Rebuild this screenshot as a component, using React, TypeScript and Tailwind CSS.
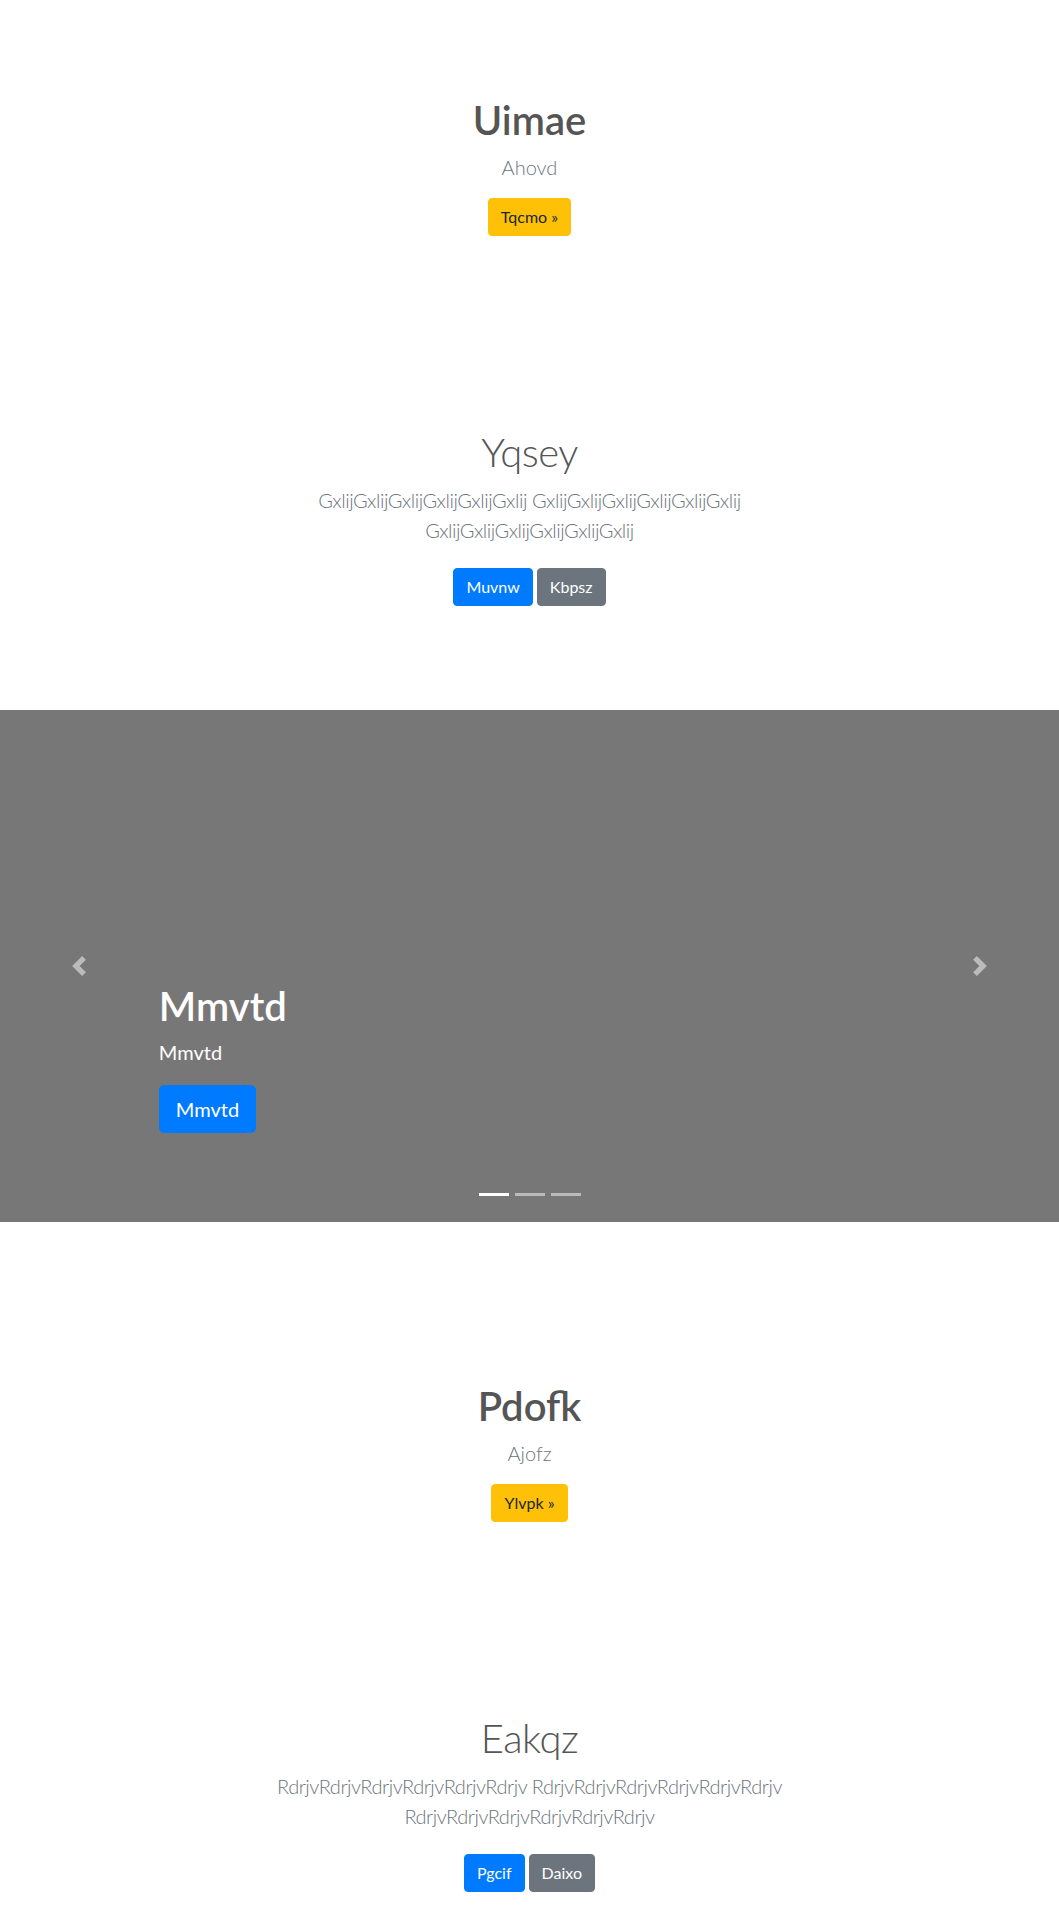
import React from "react";

const font = { fontFamily: 'Lato, "Open Sans", Arial, sans-serif' };

function Btn({ color, children }: { color: "warning" | "primary" | "secondary"; children: React.ReactNode }) {
  const cls =
    color === "warning"
      ? "bg-[#ffc107] border-[#ffc107] text-[#212529]"
      : color === "primary"
      ? "bg-[#007bff] border-[#007bff] text-white"
      : "bg-[#6c757d] border-[#6c757d] text-white";
  return (
    <a className={`inline-block border rounded-[4px] px-[12px] py-[6px] text-[16px] leading-[24px] ${cls}`} href="#">
      {children}
    </a>
  );
}

function Jumbo({ title, lead, btn, mt }: { title: string; lead: string; btn: string; mt: string }) {
  return (
    <section className={`${mt} flex flex-col items-center text-center`}>
      <h1 className="text-[40px] leading-[48px] font-semibold text-[#555] mb-[8px]">{title}</h1>
      <p className="text-[20px] leading-[30px] font-light text-[#6c757d] mb-[16px]">{lead}</p>
      <Btn color="warning">{btn} »</Btn>
    </section>
  );
}

function Hero({ title, text, b1, b2 }: { title: string; text: string; b1: string; b2: string }) {
  return (
    <section className="mt-[192px] flex flex-col items-center text-center">
      <h1 className="text-[40px] leading-[48px] font-light text-[#555] mb-[9px] tracking-[-0.5px]">{title}</h1>
      <p className="max-w-[610px] text-[20px] leading-[30px] font-light text-[#6c757d] mb-[23px] tracking-[-0.45px]">{text}</p>
      <div className="flex gap-[4px]">
        <Btn color="primary">{b1}</Btn>
        <Btn color="secondary">{b2}</Btn>
      </div>
    </section>
  );
}

function Chevron({ dir }: { dir: "prev" | "next" }) {
  return (
    <svg width="20" height="20" viewBox="0 0 8 8" fill="#fff">
      {dir === "prev" ? (
        <path d="M5.25 0l-4 4 4 4 1.5-1.5L4.25 4l2.5-2.5L5.25 0z" />
      ) : (
        <path d="M2.75 0l-1.5 1.5L3.75 4l-2.5 2.5L2.75 8l4-4-4-4z" />
      )}
    </svg>
  );
}

function Carousel() {
  return (
    <section className="relative mt-[104px] h-[512px] bg-[#777] flex flex-col justify-end pl-[15%] pb-[89px]">
      <h1 className="text-[40px] leading-[48px] font-semibold text-white mb-[7px]">Mmvtd</h1>
      <p className="text-[20px] leading-[30px] text-white mb-[18px]">Mmvtd</p>
      <div>
        <a href="#" className="inline-block bg-[#007bff] border border-[#007bff] text-white rounded-[5px] px-[16px] py-[8px] text-[20px] leading-[30px]">
          Mmvtd
        </a>
      </div>
      <div className="absolute left-0 top-0 bottom-0 w-[15%] flex items-center justify-center opacity-50">
        <Chevron dir="prev" />
      </div>
      <div className="absolute right-0 top-0 bottom-0 w-[15%] flex items-center justify-center opacity-50">
        <Chevron dir="next" />
      </div>
      <div className="absolute left-0 right-0 bottom-[26px] flex justify-center gap-[6px]">
        <span className="block w-[30px] h-[3px] bg-white" />
        <span className="block w-[30px] h-[3px] bg-white/50" />
        <span className="block w-[30px] h-[3px] bg-white/50" />
      </div>
    </section>
  );
}

export default function App() {
  const g = "GxlijGxlijGxlijGxlijGxlijGxlij";
  const r = "RdrjvRdrjvRdrjvRdrjvRdrjvRdrjv";
  return (
    <div className="bg-white pb-[40px]" style={font}>
      <Jumbo title="Uimae" lead="Ahovd" btn="Tqcmo" mt="pt-[96px]" />
      <Hero title="Yqsey" text={`${g} ${g} ${g}`} b1="Muvnw" b2="Kbpsz" />
      <Carousel />
      <Jumbo title="Pdofk" lead="Ajofz" btn="Ylvpk" mt="mt-[160px]" />
      <Hero title="Eakqz" text={`${r} ${r} ${r}`} b1="Pgcif" b2="Daixo" />
    </div>
  );
}
